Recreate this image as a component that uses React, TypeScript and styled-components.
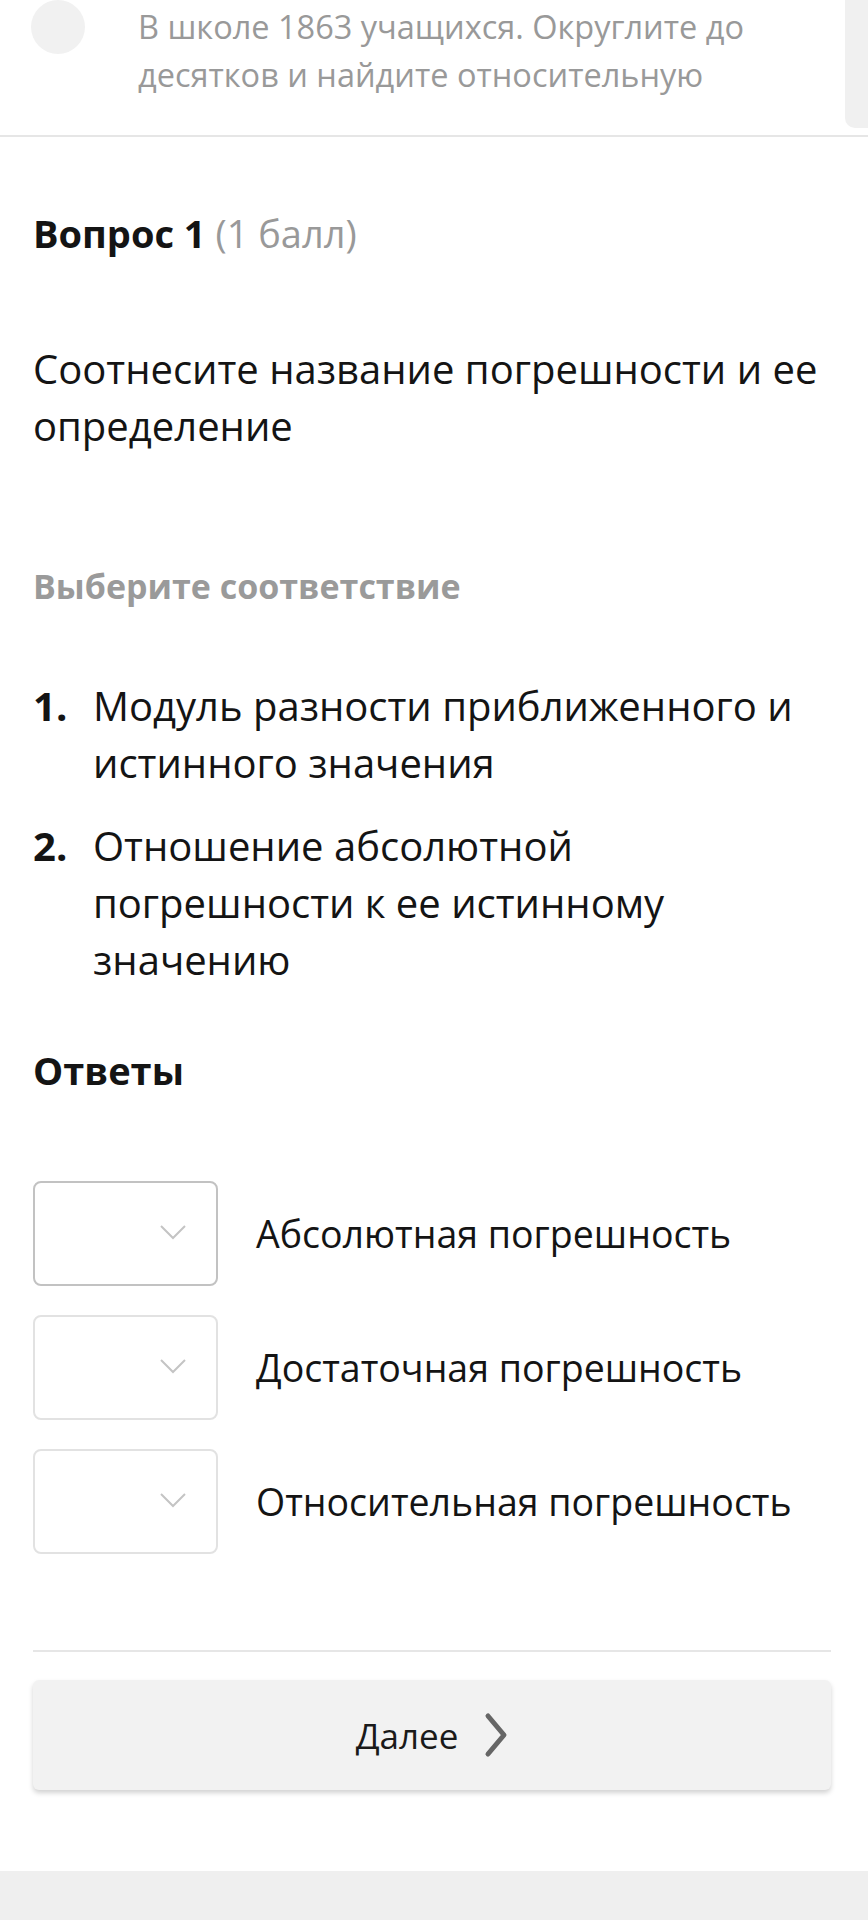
import styled, { createGlobalStyle } from "styled-components";

const GlobalStyle = createGlobalStyle`
  html, body {
    margin: 0;
    padding: 0;
    background: #efefef;
  }
  body {
    font-family: "Open Sans", "Noto Sans", sans-serif;
    color: #141414;
  }
`;

const Page = styled.div`
  background: #ffffff;
  min-height: 1871px;
  box-shadow: 0 8px 26px rgba(0, 0, 0, 0.32);
  display: flex;
  flex-direction: column;
`;

const Header = styled.div`
  display: flex;
  align-items: flex-start;
  height: 135px;
  border-bottom: 2px solid #e6e6e6;
`;

const Dot = styled.div`
  width: 54px;
  height: 54px;
  border-radius: 50%;
  background: #f1f1f1;
  margin-left: 31px;
  flex-shrink: 0;
`;

const Preview = styled.div`
  flex: 1;
  margin-left: 53px;
  margin-top: 3px;
  font-size: 32.5px;
  line-height: 48px;
  color: #999999;
  white-space: nowrap;
`;

const SideTab = styled.div`
  width: 23px;
  height: 128px;
  background: #f0f0f0;
  border-bottom-left-radius: 10px;
  flex-shrink: 0;
`;

const Body = styled.div`
  padding: 0 37px 0 33px;
  display: flex;
  flex-direction: column;
`;

const QuestionTitle = styled.div`
  margin-top: 74px;
  font-size: 38px;
  line-height: 44px;
  font-weight: 700;
`;

const Points = styled.span`
  font-weight: 400;
  color: #999999;
`;

const Prompt = styled.p`
  margin: 85px 0 0;
  font-size: 40px;
  line-height: 57px;
`;

const Hint = styled.div`
  margin-top: 112px;
  font-size: 34px;
  line-height: 40px;
  font-weight: 700;
  color: #9a9a9a;
`;

const List = styled.ol`
  list-style: none;
  margin: 71px 0 0;
  padding: 0;
  display: flex;
  flex-direction: column;
  gap: 26px;
`;

const Item = styled.li`
  display: flex;
  font-size: 40px;
  line-height: 57px;
`;

const Num = styled.span`
  width: 60px;
  flex-shrink: 0;
  font-weight: 700;
`;

const SectionTitle = styled.div`
  margin-top: 60px;
  font-size: 38px;
  line-height: 44px;
  font-weight: 700;
`;

const Answers = styled.div`
  margin-top: 89px;
  display: flex;
  flex-direction: column;
  gap: 29px;
`;

const AnswerRow = styled.div`
  display: flex;
  align-items: center;
  gap: 38px;
`;

const SelectBox = styled.div<{ $active?: boolean }>`
  width: 185px;
  height: 105px;
  box-sizing: border-box;
  border: 2px solid ${(p) => (p.$active ? "#c2c2c2" : "#e2e2e2")};
  border-radius: 8px;
  display: flex;
  justify-content: flex-end;
  align-items: flex-start;
  padding: 42px 30px 0 0;
  flex-shrink: 0;
`;

const AnswerLabel = styled.span`
  font-size: 37.5px;
  line-height: 50px;
`;

const Divider = styled.div`
  margin-top: 96px;
  height: 2px;
  background: #e6e6e6;
`;

const NextButton = styled.button`
  margin-top: 28px;
  height: 110px;
  border: none;
  border-radius: 6px;
  background: #f2f2f2;
  box-shadow: 0 3px 5px rgba(0, 0, 0, 0.18);
  display: flex;
  align-items: center;
  justify-content: center;
  gap: 26px;
  font-family: "Open Sans", "Noto Sans", sans-serif;
  font-size: 35px;
  color: #1a1a1a;
  padding: 0;
`;

const Chevron = () => (
  <svg width="26" height="15" viewBox="0 0 26 15" fill="none">
    <path d="M1 1 L13 13 L25 1" stroke="#c4c4c4" strokeWidth="2" />
  </svg>
);

const NextArrow = () => (
  <svg width="24" height="46" viewBox="0 0 24 46" fill="none">
    <path
      d="M4 4 L20 23 L4 42"
      stroke="#666666"
      strokeWidth="5"
      strokeLinecap="round"
      strokeLinejoin="round"
    />
  </svg>
);

const items = [
  "Модуль разности приближенного и истинного значения",
  "Отношение абсолютной погрешности к ее истинному значению",
];

const answers = [
  "Абсолютная погрешность",
  "Достаточная погрешность",
  "Относительная погрешность",
];

export default function App() {
  return (
    <>
      <GlobalStyle />
      <Page>
        <Header>
          <Dot />
          <Preview>
            В школе 1863 учащихся. Округлите до
            <br />
            десятков и найдите относительную
          </Preview>
          <SideTab />
        </Header>
        <Body>
          <QuestionTitle>
            Вопрос 1 <Points>(1 балл)</Points>
          </QuestionTitle>
          <Prompt>Соотнесите название погрешности и ее определение</Prompt>
          <Hint>Выберите соответствие</Hint>
          <List>
            {items.map((text, i) => (
              <Item key={i}>
                <Num>{i + 1}.</Num>
                <span>{text}</span>
              </Item>
            ))}
          </List>
          <SectionTitle>Ответы</SectionTitle>
          <Answers>
            {answers.map((a, i) => (
              <AnswerRow key={a}>
                <SelectBox $active={i === 0}>
                  <Chevron />
                </SelectBox>
                <AnswerLabel>{a}</AnswerLabel>
              </AnswerRow>
            ))}
          </Answers>
          <Divider />
          <NextButton>
            Далее
            <NextArrow />
          </NextButton>
        </Body>
      </Page>
    </>
  );
}
